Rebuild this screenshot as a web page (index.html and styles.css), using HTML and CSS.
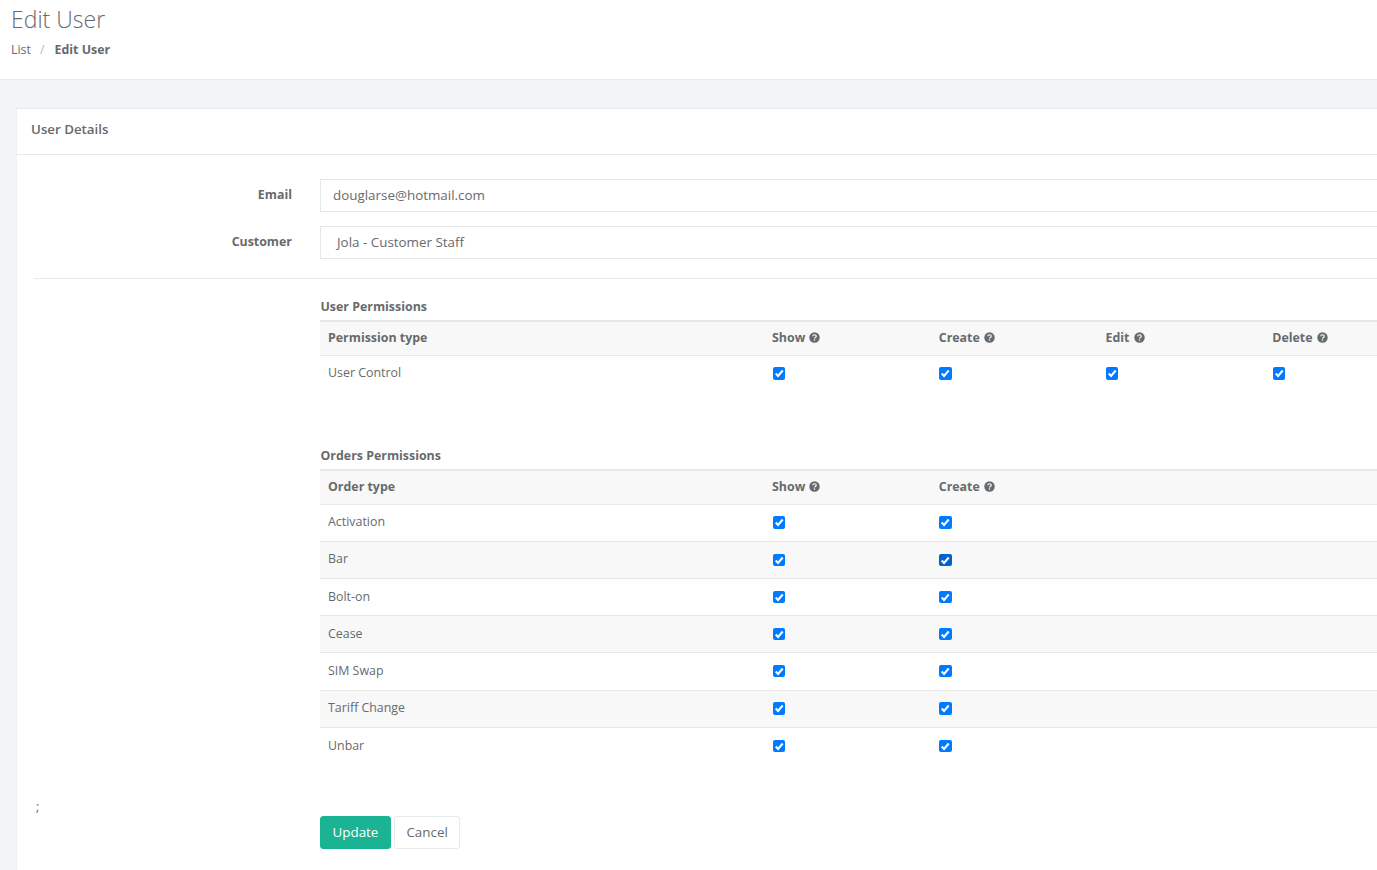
FILE: index.html
```html
<!DOCTYPE html>
<html lang="en">
<head>
<meta charset="utf-8">
<title>Edit User</title>
<link rel="stylesheet" href="styles.css">
</head>
<body>
<svg class="defs" width="0" height="0" aria-hidden="true">
  <symbol id="help" viewBox="0 0 12 12">
    <circle cx="6" cy="6" r="5.7" fill="#676a6c"/>
    <path d="M4.1 4.7C4.2 3.5 5 3 6 3c1.1 0 1.9.6 1.9 1.5 0 .8-.5 1.1-1.1 1.5-.5.3-.8.6-.8 1.1" fill="none" stroke="#fff" stroke-width="1.3"/>
    <rect x="5.3" y="8" width="1.4" height="1.4" fill="#fff"/>
  </symbol>
  <symbol id="tick" viewBox="0 0 12 12">
    <path d="M2.6 6.3 4.9 8.6 9.4 3.4" fill="none" stroke="#fff" stroke-width="2"/>
  </symbol>
</svg>
<header class="page-head">
  <h1>Edit User</h1>
  <nav class="crumbs"><span>List</span><span class="sep">/</span><strong>Edit User</strong></nav>
</header>
<main class="content">
  <section class="card">
    <h2 class="card-title">User Details</h2>
    <div class="card-body">
      <div class="field">
        <label class="field-label">Email</label>
        <div class="input">douglarse@hotmail.com</div>
      </div>
      <div class="field">
        <label class="field-label">Customer</label>
        <div class="input select">Jola - Customer Staff</div>
      </div>
      <hr class="rule">
      <div class="perms">
        <h3>User Permissions</h3>
        <table>
          <thead><tr>
            <th>Permission type</th>
            <th>Show <svg class="help"><use href="#help"/></svg></th>
            <th>Create <svg class="help"><use href="#help"/></svg></th>
            <th>Edit <svg class="help"><use href="#help"/></svg></th>
            <th>Delete <svg class="help"><use href="#help"/></svg></th>
          </tr></thead>
          <tbody>
            <tr class="plain"><td>User Control</td>
              <td><span class="check"><svg><use href="#tick"/></svg></span></td>
              <td><span class="check"><svg><use href="#tick"/></svg></span></td>
              <td><span class="check"><svg><use href="#tick"/></svg></span></td>
              <td><span class="check"><svg><use href="#tick"/></svg></span></td>
            </tr>
          </tbody>
        </table>
      </div>
      <div class="perms orders">
        <h3>Orders Permissions</h3>
        <table>
          <thead><tr>
            <th>Order type</th>
            <th>Show <svg class="help"><use href="#help"/></svg></th>
            <th>Create <svg class="help"><use href="#help"/></svg></th>
            <th></th><th></th>
          </tr></thead>
          <tbody>
            <tr><td>Activation</td><td><span class="check"><svg><use href="#tick"/></svg></span></td><td><span class="check"><svg><use href="#tick"/></svg></span></td><td></td><td></td></tr>
            <tr><td>Bar</td><td><span class="check"><svg><use href="#tick"/></svg></span></td><td><span class="check focus"><svg><use href="#tick"/></svg></span></td><td></td><td></td></tr>
            <tr><td>Bolt-on</td><td><span class="check"><svg><use href="#tick"/></svg></span></td><td><span class="check"><svg><use href="#tick"/></svg></span></td><td></td><td></td></tr>
            <tr><td>Cease</td><td><span class="check"><svg><use href="#tick"/></svg></span></td><td><span class="check"><svg><use href="#tick"/></svg></span></td><td></td><td></td></tr>
            <tr><td>SIM Swap</td><td><span class="check"><svg><use href="#tick"/></svg></span></td><td><span class="check"><svg><use href="#tick"/></svg></span></td><td></td><td></td></tr>
            <tr><td>Tariff Change</td><td><span class="check"><svg><use href="#tick"/></svg></span></td><td><span class="check"><svg><use href="#tick"/></svg></span></td><td></td><td></td></tr>
            <tr><td>Unbar</td><td><span class="check"><svg><use href="#tick"/></svg></span></td><td><span class="check"><svg><use href="#tick"/></svg></span></td><td></td><td></td></tr>
          </tbody>
        </table>
      </div>
      <div class="foot">
        <span class="semi">;</span>
        <div class="actions">
          <button class="btn primary" type="button">Update</button>
          <button class="btn" type="button">Cancel</button>
        </div>
      </div>
    </div>
  </section>
</main>
</body>
</html>
```
FILE: styles.css
```css
* { box-sizing: border-box; }
html, body { margin: 0; height: 100%; }
body {
  width: 1377px;
  height: 870px;
  overflow: hidden;
  background: #f3f4f8;
  color: #676a6c;
  font-family: "Open Sans", sans-serif;
  font-size: 12.4px;
  line-height: 18px;
}
.defs { display: block; height: 0; }
.page-head {
  height: 80px;
  padding: 5px 11px 0;
  background: #fff;
  border-bottom: 1px solid #e7eaec;
}
h1 {
  margin: 0;
  font-size: 23px;
  font-weight: 300;
  line-height: 29px;
}
.crumbs {
  display: flex;
  margin-top: 7px;
  line-height: 18px;
}
.sep { margin: 0 10px 0 9px; color: #bbb; }
.crumbs strong { font-weight: 700; }
.content { padding: 28px 0 0 16px; }
.card {
  width: 1500px;
  min-height: 790px;
  background: #fff;
  border-top: 1px solid #e7eaec;
  border-left: 1px solid #eef0f3;
}
.card-title {
  margin: 0;
  height: 46px;
  padding: 0 14px;
  border-bottom: 1px solid #e7eaec;
  font-size: 13.3px;
  font-weight: 600;
  line-height: 41px;
}
.card-body { padding: 24px 0 0; }
.field {
  display: flex;
  align-items: flex-start;
  margin-bottom: 14px;
}
.field-label {
  width: 275px;
  text-align: right;
  font-weight: 700;
  line-height: 32px;
  flex: none;
}
.input {
  flex: 1;
  margin-left: 28px;
  height: 33px;
  padding: 0 12px;
  border: 1px solid #e5e6e7;
  font-size: 13.4px;
  line-height: 30px;
  color: #676a6c;
}
.select { padding-left: 16px; line-height: 30px; }
.rule {
  margin: 19px 0 0 17px;
  border: 0;
  border-top: 1px solid #e7eaec;
}
.perms { margin: 19px 0 0 303px; }
.perms h3 {
  margin: 0 0 4px 0.5px;
  font-size: 12.4px;
  font-weight: 700;
  line-height: 18px;
}
.perms.orders { margin-top: 55px; }
table {
  width: 1111px;
  table-layout: fixed;
  border-collapse: collapse;
  border-top: 2px solid #e7e7e7;
}
th:first-child, td:first-child { width: 444px; }
th {
  height: 34px;
  padding: 0 8px;
  text-align: left;
  font-weight: 700;
  background: #f8f8f8;
  border-bottom: 1px solid #e7eaec;
}
td {
  height: 37.2px;
  padding: 0 8px 1px;
  border-bottom: 1px solid #e7e7e7;
  vertical-align: middle;
}
tbody tr:nth-child(even) td { background: #f8f8f8; }
tbody tr:last-child td, .plain td { border-bottom: 0; }
.help { width: 11px; height: 11px; vertical-align: -1px; margin-left: 1px; }
.check {
  display: block;
  width: 12.4px;
  height: 12.4px;
  margin: 0.5px 0 0 0.5px;
  background: #007bff;
  border-radius: 2px;
}
.check svg { display: block; width: 12.4px; height: 12.4px; }
.check.focus { background: #0062cc; }
.foot {
  position: relative;
  margin-top: 51px;
  padding-left: 303px;
}
.semi {
  position: absolute;
  left: 19px;
  top: -18px;
}
.actions { display: flex; gap: 3px; }
.btn {
  height: 33px;
  padding: 0 11.5px;
  border: 1px solid #e7eaec;
  border-radius: 3px;
  background: #fff;
  color: #676a6c;
  font: 13.4px "Open Sans", sans-serif;
}
.btn.primary {
  background: #1ab394;
  border-color: #1ab394;
  color: #fff;
}
```
